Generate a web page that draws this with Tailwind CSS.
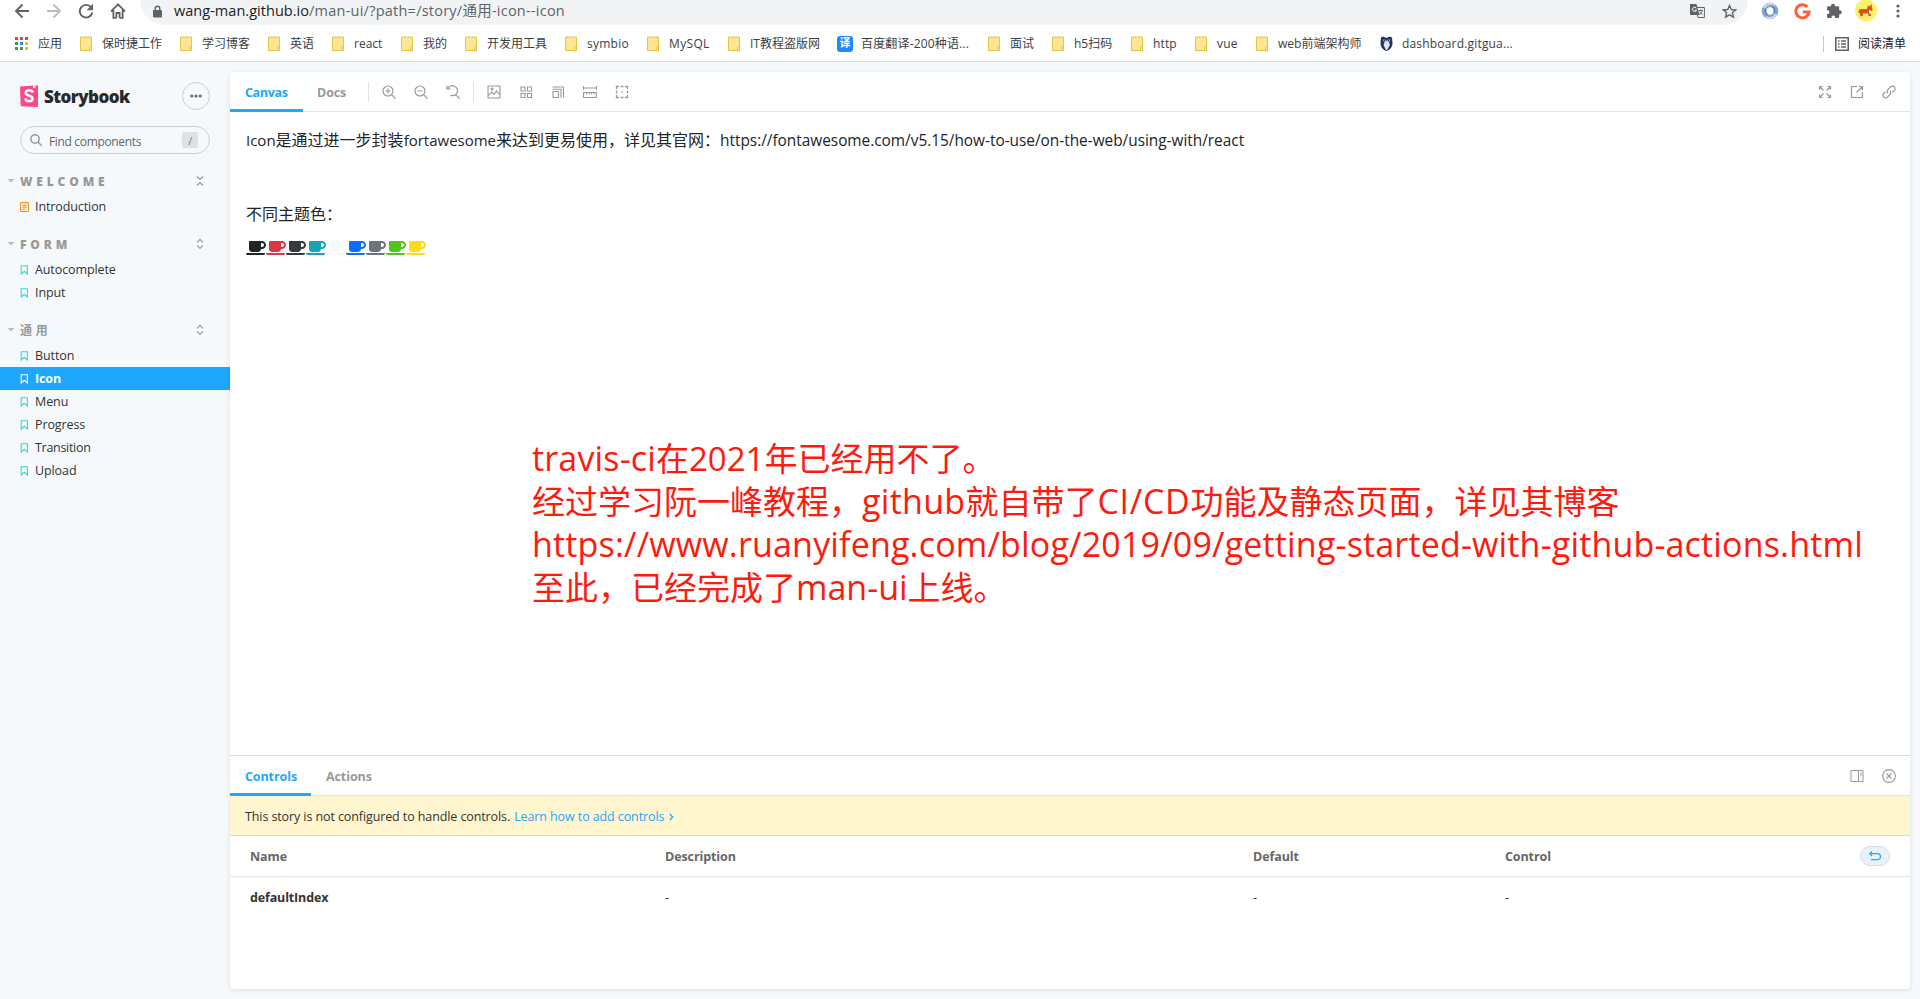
<!DOCTYPE html>
<html lang="zh-CN">
<head>
<meta charset="utf-8">
<title>通用 / Icon - Storybook</title>
<script src="https://cdn.jsdelivr.net/npm/@tailwindcss/browser@4"></script>
</head>
<body class="flex h-[999px] w-[1920px] flex-col overflow-hidden bg-[#f6f9fc] font-['Open_Sans','Noto_Sans_CJK_SC',sans-serif] text-[12.5px] tracking-[-0.1px] text-[#333]">

<!-- symbols -->
<svg class="hidden">
  <symbol id="folder" viewBox="0 0 12 16"><path d="M.5 1h11v13.5H.5z" fill="#ffe694" stroke="#e9c444"/><path d="M9.5 15v-3.2a1 1 0 0 1 2 0V15z" fill="#ffe694" stroke="#e9c444" stroke-width=".9"/></symbol>
  <symbol id="bookmark" viewBox="0 0 10 12"><path d="M1.200 1.700h6.200v8.300L4.300 7.300 1.200 10z" fill="none" stroke="currentColor" stroke-width="1.100"/></symbol>
  <symbol id="cup" viewBox="0 0 640 512"><path fill="currentColor" d="M192 384h192c53 0 96-43 96-96h32c70.600 0 128-57.400 128-128S582.600 32 512 32H120c-13.300 0-24 10.700-24 24v232c0 53 43 96 96 96zM512 96c35.300 0 64 28.700 64 64s-28.700 64-64 64h-32V96h32zm47.700 384H48.300c-47.600 0-61-64-36-64h583.300c25 0 11.800 64-35.900 64z"/></symbol>
  <symbol id="caret" viewBox="0 0 8 4"><path d="M.5 0h7L4 3.500z" fill="currentColor"/></symbol>
  <symbol id="expand" viewBox="0 0 10 12"><path d="M2 4.300 5 1.300 8 4.300M2 7.300l3 3 3-3" fill="none" stroke="currentColor" stroke-width="1.200"/></symbol>
</svg>

<!-- browser toolbar -->
<header class="flex h-[62px] shrink-0 flex-col border-b border-[#d9dbde] bg-white">
  <div class="flex h-[25px] shrink-0">
    <div class="flex h-[22px] w-[140px] items-center gap-[16px] pl-[14px] text-[#5f6368]">
      <svg class="size-4" viewBox="0 0 16 16" fill="none" stroke="currentColor" stroke-width="1.900"><path d="M15 8H2M8.500 1.500 2 8l6.500 6.500"/></svg>
      <svg class="size-4 text-[#babcbe]" viewBox="0 0 16 16" fill="none" stroke="currentColor" stroke-width="1.900"><path d="M1 8h13M7.500 1.500 14 8l-6.500 6.500"/></svg>
      <svg class="size-4" viewBox="0 0 16 16" fill="none" stroke="currentColor" stroke-width="1.900"><path d="M13 4.200A6.300 6.300 0 1 0 14.300 9.500"/><path d="M15 .8v6.400H8.600z" fill="currentColor" stroke="none"/></svg>
      <svg class="size-4" viewBox="0 0 16 16" fill="none" stroke="currentColor" stroke-width="1.800"><path d="M1 8.300 8 1.300l7 7M3.400 7v7.900h3M12.600 7v7.900h-3M6.400 15V10h3.200v5"/></svg>
    </div>
    <div class="flex h-[25px] w-[1608px] items-center justify-between rounded-b-full bg-[#f1f3f4] pr-[11px] pb-[3px] pl-[13px]">
      <div class="flex items-center text-[14.5px] leading-[20px]">
        <svg class="mr-[12px] h-[13px] w-[9px] text-[#5f6368]" viewBox="0 0 9 13"><path d="M2.200 5.500V3.600a2.300 2.300 0 0 1 4.600 0v1.900" fill="none" stroke="currentColor" stroke-width="1.400"/><rect y="5" width="9" height="7.500" rx="1" fill="currentColor"/></svg>
        <span class="tracking-[0.030px] text-[#202124]">wang-man.github.io</span><span class="tracking-[0.240px] text-[#5f6368]">/man-ui/?path=/story/通用-icon--icon</span>
      </div>
      <div class="flex items-center gap-[17px] text-[#5f6368]">
        <svg class="h-[14px] w-[15px]" viewBox="0 0 15 14"><path d="M6 3.500h8.400v10H8z" fill="#f1f3f4" stroke="currentColor"/><path d="M0 0h6.500l3 11H1a1 1 0 0 1-1-1z" fill="currentColor"/><path d="M6.400 4.200A2.100 2.100 0 1 0 6.600 6H4.800" fill="none" stroke="#fff" stroke-width="1"/><path d="M8.500 6.500H13M10.700 5.500v1M12 6.500c-.4 2-1.500 3.400-3 4.300M9.500 7.800l3 3" fill="none" stroke="currentColor" stroke-width=".9"/></svg>
        <svg class="size-[15px]" viewBox="0 0 15 15"><path d="m7.500 1.500 1.800 4 4.400.4-3.300 2.900 1 4.300-3.900-2.300-3.900 2.300 1-4.300L1.300 5.900l4.400-.4z" fill="none" stroke="currentColor" stroke-width="1.400"/></svg>
      </div>
    </div>
    <div class="flex h-[22px] items-center pl-[13px]">
      <svg class="size-[18px]" viewBox="0 0 18 18"><circle cx="9" cy="9" r="6" fill="none" stroke="#7fa3cc" stroke-width="4.600"/><path d="M3 6a7 7 0 0 1 11-2.500M15 12a7 7 0 0 1-10 3" fill="none" stroke="#c4d8ec" stroke-width="2.200"/><path d="M11 4.500a5 5 0 0 1 2 6M7 13a5 5 0 0 1-2-6" fill="none" stroke="#4b7bb0" stroke-width="1.200"/></svg>
      <svg class="ml-[15px] size-[17px]" viewBox="0 0 17 17"><path d="M13.400 3.900A6.600 6.600 0 1 0 15 9H8.800" fill="none" stroke="#ff5e36" stroke-width="3"/></svg>
      <svg class="ml-[15px] size-[16px] text-[#5f6368]" viewBox="0 0 16 16"><path d="M1 4.500A1.300 1.300 0 0 1 2.300 3.200H5V2.700a2 2 0 0 1 4 0v.5h2.900a1.300 1.300 0 0 1 1.300 1.300v2.700h.6a2 2 0 0 1 0 4h-.6v2.600a1.300 1.300 0 0 1-1.300 1.300H9.200v-.6a1.900 1.900 0 0 0-3.800 0v.6H2.300A1.300 1.300 0 0 1 1 13.800v-2.700h.5a1.900 1.900 0 0 0 0-3.800H1z" fill="currentColor"/></svg>
      <svg class="ml-[13px] size-[22px]" viewBox="0 0 22 22"><circle cx="11" cy="10.500" r="11" fill="#fef266"/><path d="M4 9.500 7 9h5l1-4 1.500 1.500L16.500 4l.5 4 1 2-2.500 1.500.5 6h-2l-1-4H8l-.5 4h-2l-.5-4-1.500-1z" fill="#d9531e"/><path d="m14 10 2.500 1-.5 3-2-1zM5.500 16h2v1.500h-2zM14 16h2v1.500h-2z" fill="#fff3e0"/></svg>
      <svg class="ml-[19px] h-[14px] w-[4px] text-[#5f6368]" viewBox="0 0 4 14" fill="currentColor"><circle cx="2" cy="2" r="1.600"/><circle cx="2" cy="7" r="1.600"/><circle cx="2" cy="12" r="1.600"/></svg>
    </div>
  </div>
  <!-- bookmarks bar -->
  <nav class="flex h-[36px] items-center pt-px pl-[15px] text-[12px] tracking-normal whitespace-nowrap text-[#3c4043] [&>a]:flex [&>a]:shrink-0 [&>a]:items-center [&_svg]:shrink-0">
    <a class="w-[65px] gap-[10px]"><svg class="size-[13px]" viewBox="0 0 13 13"><path d="M0 0h3v3H0zM5 0h3v3H5zM10 0h3v3h-3z" fill="#ea4335"/><path d="M0 5h3v3H0zM0 10h3v3H0z" fill="#34a05a"/><path d="M5 5h3v3H5z" fill="#2f86f6"/><path d="M5 10h3v3H5z" fill="#34a05a"/><path d="M10 5h3v3h-3zM10 10h3v3h-3z" fill="#fbb316"/></svg>应用</a>
    <a class="w-[100px] gap-[10px]"><svg class="h-4 w-3"><use href="#folder"/></svg>保时捷工作</a>
    <a class="w-[88px] gap-[10px]"><svg class="h-4 w-3"><use href="#folder"/></svg>学习博客</a>
    <a class="w-[64px] gap-[10px]"><svg class="h-4 w-3"><use href="#folder"/></svg>英语</a>
    <a class="w-[69px] gap-[10px]"><svg class="h-4 w-3"><use href="#folder"/></svg>react</a>
    <a class="w-[64px] gap-[10px]"><svg class="h-4 w-3"><use href="#folder"/></svg>我的</a>
    <a class="w-[100px] gap-[10px]"><svg class="h-4 w-3"><use href="#folder"/></svg>开发用工具</a>
    <a class="w-[82px] gap-[10px] tracking-[0.250px]"><svg class="h-4 w-3"><use href="#folder"/></svg>symbio</a>
    <a class="w-[81px] gap-[10px] tracking-[0.350px]"><svg class="h-4 w-3"><use href="#folder"/></svg>MySQL</a>
    <a class="w-[109px] gap-[10px]"><svg class="h-4 w-3"><use href="#folder"/></svg>IT教程盗版网</a>
    <a class="w-[151px] gap-[8px] tracking-[0.160px]"><span class="flex size-4 items-center justify-center rounded-[3px] bg-[#1e88ff] text-[11px] font-bold tracking-normal text-white">译</span>百度翻译-200种语...</a>
    <a class="w-[64px] gap-[10px]"><svg class="h-4 w-3"><use href="#folder"/></svg>面试</a>
    <a class="w-[79px] gap-[10px]"><svg class="h-4 w-3"><use href="#folder"/></svg>h5扫码</a>
    <a class="w-[64px] gap-[10px] tracking-[0.150px]"><svg class="h-4 w-3"><use href="#folder"/></svg>http</a>
    <a class="w-[61px] gap-[10px] tracking-[0.250px]"><svg class="h-4 w-3"><use href="#folder"/></svg>vue</a>
    <a class="w-[124px] gap-[10px]"><svg class="h-4 w-3"><use href="#folder"/></svg>web前端架构师</a>
    <a class="gap-[9px] tracking-[0.180px]"><svg class="h-[15px] w-[13px]" viewBox="0 0 13 15"><path d="M1 1.500 3.500.5 6.500 2 9.500.5 12 1.500 12.500 7c0 4-2.500 7-6 8C3 14 .5 11 .5 7z" fill="#24345c"/><path d="M3 3.500 6 4l.5 1.500L7 4l3-.5L9 7l1 2-3 5H6L3.500 9 4.500 7z" fill="#dfe5ec"/><circle cx="4.700" cy="4.800" r=".9" fill="#24345c"/><circle cx="8.300" cy="4.800" r=".9" fill="#24345c"/></svg>dashboard.gitgua...</a>
    <div class="mr-[14px] ml-auto flex items-center text-[#202124]">
      <span class="mr-[11px] h-4 w-px bg-[#c4c7ca]"></span>
      <svg class="mr-[9px] size-[14px] text-[#5f6368]" viewBox="0 0 14 14"><path d="M.8.8h12.400v12.400H.8z" fill="none" stroke="currentColor" stroke-width="1.600"/><path d="M3 4h1.500M6 4h5M3 7h1.500M6 7h5M3 10h1.500M6 10h5" stroke="currentColor" stroke-width="1.300"/></svg>
      阅读清单
    </div>
  </nav>
</header>

<div class="flex min-h-0 flex-1">
  <!-- sidebar -->
  <aside class="flex w-[230px] shrink-0 flex-col pt-[20px] leading-[23px]">
    <div class="flex h-[28px] items-center pr-[20px] pl-[20px]">
      <svg class="h-[22px] w-[18px]" viewBox="0 0 18 22"><path d="M0 1.400 17 .3q1-.1 1 1v19.600q0 1-1 1L1.600 21.300q-.9 0-.9-1z" fill="#ff4785"/><path d="M13 .5 15.500.3v3L14.200 2.400l-1.300 1z" fill="#fff"/><path d="M12.600 7.600C12.300 4.300 5.500 4.500 5.700 7.800c.2 3.400 6.900 2.400 6.900 6 0 3.300-7 3.200-7.200-.4" fill="none" stroke="#fff" stroke-width="2.500"/></svg>
      <span class="ml-[6px] text-[17px] font-extrabold tracking-[-0.550px] text-[#2a2a2a]">Storybook</span>
      <span class="ml-auto flex size-[28px] items-center justify-center rounded-full border border-[#cdd1d4] text-[#6b6b6b]"><svg class="h-[4px] w-[12px]" viewBox="0 0 12 4" fill="currentColor"><circle cx="1.800" cy="2" r="1.600"/><circle cx="6" cy="2" r="1.600"/><circle cx="10.200" cy="2" r="1.600"/></svg></span>
    </div>
    <div class="mx-[20px] mt-[16px] flex h-[28px] items-center rounded-full border border-[#cbcfd2] pr-[11px] pl-[9px] text-[12px] tracking-[-0.340px] text-[#666]">
      <svg class="mr-[7px] size-[12px] text-[#999]" viewBox="0 0 12 12" fill="none" stroke="currentColor" stroke-width="1.500"><circle cx="5" cy="5" r="4.200"/><path d="m8 8 3.600 3.600"/></svg>
      <span class="pt-[2px]">Find components</span>
      <span class="ml-auto flex h-4 w-4 items-center justify-center rounded-[2px] bg-[#dee1e3] text-[11px] text-[#777]">/</span>
    </div>

    <h2 class="mt-[16px] flex h-[23px] items-center text-[12px] font-extrabold tracking-[3.850px] text-[#999]"><svg class="mr-[5px] mb-[2px] ml-[7px] h-[4px] w-[8px] text-[#bbb]"><use href="#caret"/></svg>WELCOME<svg class="mr-[25px] mb-[2px] ml-auto h-[12px] w-[10px]" viewBox="0 0 10 12" fill="none" stroke="currentColor" stroke-width="1.200"><path d="m2 1.500 3 3 3-3M2 10.500l3-3 3 3"/></svg></h2>
    <a class="mt-[2px] flex h-[23px] items-center pl-[20px]"><svg class="mr-[6px] h-[10px] w-[9px] text-[#ff8300]" viewBox="0 0 9 10" fill="none" stroke="currentColor"><path d="M.6.6h7.800v8.800H.6zM2.300 3.200h4.400M2.300 5.200h4.400M2.300 7.200h3"/></svg>Introduction</a>

    <h2 class="mt-[15px] flex h-[23px] items-center text-[12px] font-extrabold tracking-[3.850px] text-[#999]"><svg class="mr-[5px] mb-[2px] ml-[7px] h-[4px] w-[8px] text-[#bbb]"><use href="#caret"/></svg>FORM<svg class="mr-[25px] mb-[2px] ml-auto h-[12px] w-[10px]"><use href="#expand"/></svg></h2>
    <a class="mt-[2px] flex h-[23px] items-center pl-[20px]"><svg class="mr-[5px] h-[12px] w-[10px] text-[#37d5d3]"><use href="#bookmark"/></svg>Autocomplete</a>
    <a class="flex h-[23px] items-center pl-[20px]"><svg class="mr-[5px] h-[12px] w-[10px] text-[#37d5d3]"><use href="#bookmark"/></svg>Input</a>

    <h2 class="mt-[15px] flex h-[23px] items-center text-[12px] font-bold tracking-[3.850px] text-[#999]"><svg class="mr-[5px] mb-[2px] ml-[7px] h-[4px] w-[8px] text-[#bbb]"><use href="#caret"/></svg>通用<svg class="mr-[25px] mb-[2px] ml-auto h-[12px] w-[10px]"><use href="#expand"/></svg></h2>
    <a class="mt-[2px] flex h-[23px] items-center pl-[20px]"><svg class="mr-[5px] h-[12px] w-[10px] text-[#37d5d3]"><use href="#bookmark"/></svg>Button</a>
    <a class="flex h-[23px] items-center bg-[#1ea7fd] pl-[20px] font-bold text-white"><svg class="mr-[5px] h-[12px] w-[10px]"><use href="#bookmark"/></svg>Icon</a>
    <a class="flex h-[23px] items-center pl-[20px]"><svg class="mr-[5px] h-[12px] w-[10px] text-[#37d5d3]"><use href="#bookmark"/></svg>Menu</a>
    <a class="flex h-[23px] items-center pl-[20px]"><svg class="mr-[5px] h-[12px] w-[10px] text-[#37d5d3]"><use href="#bookmark"/></svg>Progress</a>
    <a class="flex h-[23px] items-center pl-[20px] tracking-[-0.300px]"><svg class="mr-[5px] h-[12px] w-[10px] text-[#37d5d3]"><use href="#bookmark"/></svg>Transition</a>
    <a class="flex h-[23px] items-center pl-[20px]"><svg class="mr-[5px] h-[12px] w-[10px] text-[#37d5d3]"><use href="#bookmark"/></svg>Upload</a>
  </aside>

  <!-- main -->
  <main class="relative mt-[10px] mb-[10px] flex w-[1680px] flex-col overflow-hidden rounded-[4px] bg-white shadow-[0_1px_5px_rgba(0,0,0,0.1)]">
    <div class="flex h-[40px] shrink-0 items-center border-b border-[#e3e4e5] font-bold text-[#999] [&_svg]:size-[14px] [&_svg]:shrink-0 [&_svg]:fill-none [&_svg]:stroke-current">
      <span class="flex h-[40px] w-[73px] items-center border-b-3 border-[#1ea7fd] pt-[6px] pl-[15px] tracking-[-0.350px] text-[#1ea7fd]">Canvas</span>
      <span class="w-[65px] pt-[3px] pl-[14px]">Docs</span>
      <span class="h-5 w-px bg-[#e3e4e5]"></span>
      <div class="flex w-[104px] gap-[18px] pl-[13px]">
        <svg viewBox="0 0 14 14" stroke-width="1.200"><circle cx="6" cy="6" r="5"/><path d="m9.600 9.600 4 4M3.500 6h5M6 3.500v5"/></svg>
        <svg viewBox="0 0 14 14" stroke-width="1.200"><circle cx="6" cy="6" r="5"/><path d="m9.600 9.600 4 4M3.500 6h5"/></svg>
        <svg viewBox="0 0 14 14" stroke-width="1.200"><path d="M2 3.500A5 5 0 1 1 4.500 10.300M9.700 9.600l4 4M1 .8v3.200h3.500"/></svg>
      </div>
      <span class="h-5 w-px bg-[#e3e4e5]"></span>
      <div class="flex gap-[18px] pl-[13px]">
        <svg viewBox="0 0 14 14" stroke-width="1.100"><path d="M1 1h12v12H1zM1 11l3.500-4L7 9.500 9.500 6 13 10"/><circle cx="5" cy="4" r="1"/></svg>
        <svg viewBox="0 0 14 14" stroke-width="1.100"><path d="M2 2h4v4H2zM8.500 2h4v4h-4zM2 8.500h4v4H2zM8.500 8.500h4v4h-4z"/></svg>
        <svg viewBox="0 0 14 14" stroke-width="1.100"><path d="M2 6.500h5.500v6H2zM1.500 4.200h8.500v8.600M1.500 2h11v10.800"/></svg>
        <svg viewBox="0 0 14 14" stroke-width="1.100"><path d="M.6 1v4M13.400 1v4M.6 3h12.800M.6 7.500h12.800v5H.6zM3.500 7.500v2M6 7.500v2M8.500 7.500v2M11 7.500v2"/></svg>
        <svg viewBox="0 0 14 14" stroke-width="1.300"><path d="M1.500 4V1.500H4M10 1.500h2.500V4M12.500 10v2.500H10M4 12.500H1.500V10M5.500 1.500h3M5.500 12.500h3M1.500 5.500v3M12.500 5.500v3M6.300 7h1.400"/></svg>
      </div>
      <div class="mr-[14px] ml-auto flex gap-[18px]">
        <svg viewBox="0 0 14 14" stroke-width="1.200"><path d="M1.500 4.500v-3h3M9.500 1.500h3v3M12.500 9.500v3h-3M4.500 12.500h-3v-3M1.500 1.500l4 4M12.500 1.500l-4 4M12.500 12.500l-4-4M1.500 12.500l4-4"/></svg>
        <svg viewBox="0 0 14 14" stroke-width="1.200"><path d="M7 1.500H1.500v11h11V7M9 1.500h3.500V5M12.500 1.500l-6 6"/></svg>
        <svg viewBox="0 0 14 14" stroke-width="1.300"><path d="M6 8.200a2.600 2.600 0 0 1 0-3.700L8.600 1.900a2.600 2.600 0 0 1 3.700 3.700L10.600 7.300M8 5.800a2.600 2.600 0 0 1 0 3.700l-2.600 2.600a2.600 2.600 0 0 1-3.700-3.700L3.400 6.700"/></svg>
      </div>
    </div>

    <!-- story canvas -->
    <section class="h-[643px] shrink-0 pt-[16px] pl-[16px] text-[16px] leading-[24px] tracking-normal text-[#212529]">
      <p><span class="text-[15px]">Icon</span>是通过进一步封装<span class="text-[15px]">fortawesome</span>来达到更易使用，详见其官网：<span class="text-[15.4px] tracking-[-0.015px]">https://fontawesome.com/v5.15/how-to-use/on-the-web/using-with/react</span></p>
      <p class="mt-[49px]">不同主题色：</p>
      <div class="mt-[14px] flex [&>svg]:h-4 [&>svg]:w-5">
        <svg class="text-[#212529]"><use href="#cup"/></svg>
        <svg class="text-[#dc3545]"><use href="#cup"/></svg>
        <svg class="text-[#343a40]"><use href="#cup"/></svg>
        <svg class="text-[#17a2b8]"><use href="#cup"/></svg>
        <svg class="text-[#f8f9fa]"><use href="#cup"/></svg>
        <svg class="text-[#0d6efd]"><use href="#cup"/></svg>
        <svg class="text-[#6c757d]"><use href="#cup"/></svg>
        <svg class="text-[#52c41a]"><use href="#cup"/></svg>
        <svg class="text-[#fadb14]"><use href="#cup"/></svg>
      </div>
    </section>

    <!-- annotation over the canvas -->
    <div class="absolute top-[365px] left-[302px] text-[33px] leading-[43px] tracking-normal whitespace-nowrap text-[#ff1a0e] [&_span]:text-[34px]">
      <p><span class="tracking-[0.160px]">travis-ci</span>在2021年已经用不了。</p>
      <p>经过学习阮一峰教程，<span class="tracking-[0.300px]">github</span>就自带了<span class="tracking-[0.700px]">CI/CD</span>功能及静态页面，详见其博客</p>
      <p><span class="tracking-[0.170px]">https://www.ruanyifeng.com/blog/2019/09/getting-started-with-github-actions.html</span></p>
      <p>至此，已经完成了<span>man-ui</span>上线。</p>
    </div>

    <!-- addon panel -->
    <section class="flex flex-1 flex-col border-t border-[#dcdddf]">
      <div class="flex h-[40px] shrink-0 items-center border-b border-[#e3e4e5] font-bold text-[#999]">
        <span class="flex h-[40px] w-[81px] items-center border-b-3 border-[#1ea7fd] pt-[6px] pl-[15px] text-[#1ea7fd]">Controls</span>
        <span class="pt-[3px] pl-[15px]">Actions</span>
        <div class="mr-[14px] ml-auto flex gap-[18px]">
          <svg class="size-[14px]" viewBox="0 0 14 14" fill="none" stroke="currentColor"><path d="M1 1.500h12v11H1zM8.500 1.500v11M11 3.500v4"/></svg>
          <svg class="size-[14px]" viewBox="0 0 14 14" fill="none" stroke="currentColor" stroke-width="1.100"><circle cx="7" cy="7" r="6.400"/><path d="m4.500 4.500 5 5M9.500 4.500l-5 5"/></svg>
        </div>
      </div>
      <div class="flex h-[40px] shrink-0 items-center border-b border-[#e3d9bf] bg-[#fff5cf] pt-[3px] pl-[15px] tracking-[-0.100px]">
        <span>This story is not configured to handle controls.</span>
        <a class="ml-[4px] flex items-center text-[#1ea7fd]">Learn how to add controls<svg class="ml-[5px] h-[8px] w-[5px]" viewBox="0 0 5 8" fill="none" stroke="currentColor" stroke-width="1.200"><path d="m.8 1 3 3-3 3"/></svg></a>
      </div>
      <div class="grid h-[41px] shrink-0 grid-cols-[415px_588px_252px_1fr_50px] items-center border-b border-[#e6e6e6] pl-[20px] text-[#666]">
        <span class="pt-[2px] font-bold">Name</span><span class="pt-[2px] font-bold">Description</span><span class="pt-[2px] font-bold">Default</span><span class="pt-[2px] font-bold">Control</span>
        <span class="flex h-5 w-[30px] items-center justify-center rounded-full border border-[#d0dfee] bg-[#e9f2fb] text-[#1ea7fd]"><svg class="h-[10px] w-[12px]" viewBox="0 0 12 10" fill="none" stroke="currentColor" stroke-width="1.200"><path d="M3 .5.800 2.700 3 5M.8 2.700H8.500a3 3 0 0 1 0 6H2"/></svg></span>
      </div>
      <div class="grid h-[41px] shrink-0 grid-cols-[415px_588px_252px_1fr_50px] items-center pt-[2px] pl-[20px]">
        <span class="font-bold tracking-[-0.150px]">defaultIndex</span><span>-</span><span>-</span><span>-</span>
      </div>
    </section>
  </main>
</div>
</body>
</html>
